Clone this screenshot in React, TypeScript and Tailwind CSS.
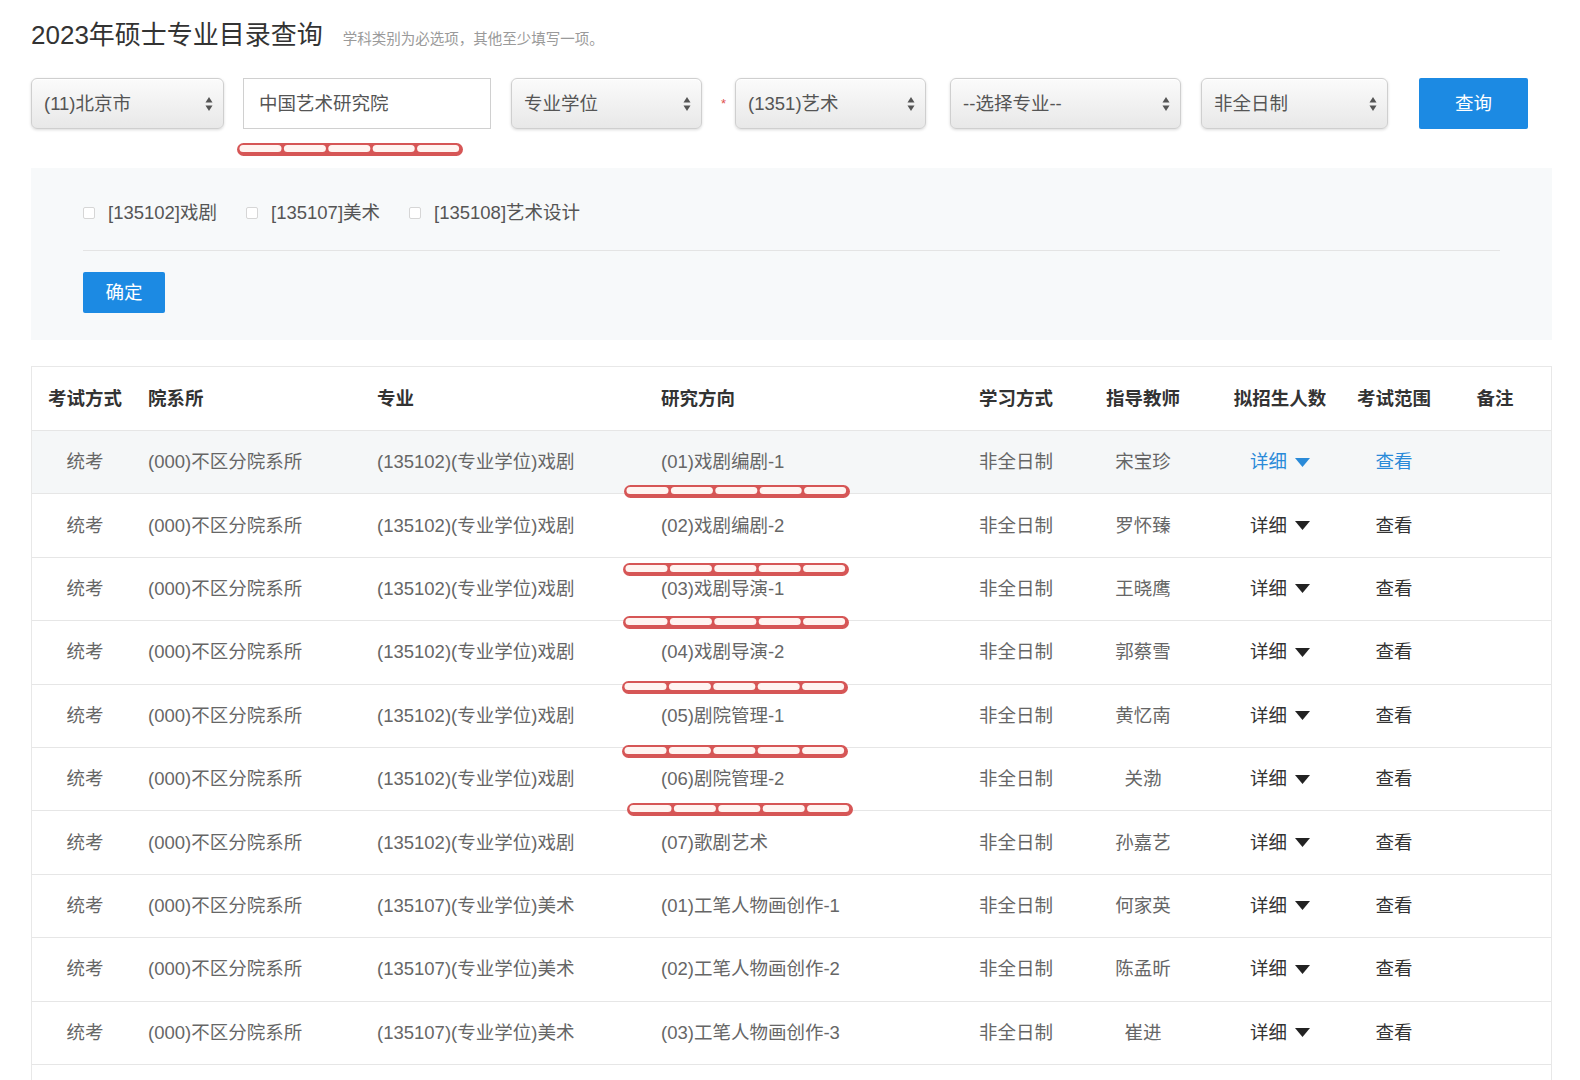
import React from "react";

const rows = [
  { major: "(135102)(专业学位)戏剧", dir: "(01)戏剧编剧-1", teacher: "宋宝珍" },
  { major: "(135102)(专业学位)戏剧", dir: "(02)戏剧编剧-2", teacher: "罗怀臻" },
  { major: "(135102)(专业学位)戏剧", dir: "(03)戏剧导演-1", teacher: "王晓鹰" },
  { major: "(135102)(专业学位)戏剧", dir: "(04)戏剧导演-2", teacher: "郭蔡雪" },
  { major: "(135102)(专业学位)戏剧", dir: "(05)剧院管理-1", teacher: "黄忆南" },
  { major: "(135102)(专业学位)戏剧", dir: "(06)剧院管理-2", teacher: "关渤" },
  { major: "(135102)(专业学位)戏剧", dir: "(07)歌剧艺术", teacher: "孙嘉艺" },
  { major: "(135107)(专业学位)美术", dir: "(01)工笔人物画创作-1", teacher: "何家英" },
  { major: "(135107)(专业学位)美术", dir: "(02)工笔人物画创作-2", teacher: "陈孟昕" },
  { major: "(135107)(专业学位)美术", dir: "(03)工笔人物画创作-3", teacher: "崔进" },
];

// red scribble marks sitting over the page: [left, top]
const marks = [
  [237, 143],
  [624, 485],
  [623, 563],
  [623, 616],
  [622, 681],
  [622, 745],
  [627, 803],
];

function Arrows() {
  return (
    <svg width="8" height="16" viewBox="0 0 8 16" className="shrink-0">
      <path d="M4 1 L7.5 6.5 L0.5 6.5 Z" fill="#555" />
      <path d="M4 15 L7.5 9.5 L0.5 9.5 Z" fill="#555" />
    </svg>
  );
}

function FakeSelect({ label, className }: { label: string; className: string }) {
  return (
    <div
      className={`h-[51px] flex items-center justify-between pl-[12px] pr-[10px] rounded-[6px] border border-[#cfcfcf] bg-linear-to-b from-[#fbfbfb] to-[#e8e8e8] shadow-[0_1px_3px_rgba(0,0,0,0.15),inset_0_1px_0_#fff] text-[18.5px] text-[#555] ${className}`}
    >
      <span>{label}</span>
      <Arrows />
    </div>
  );
}

function Mark() {
  const segs = [0, 1, 2, 3, 4];
  return (
    <svg width="226" height="13" viewBox="0 0 226 13">
      <rect x="0" y="0" width="226" height="13" rx="6.5" fill="#d65656" />
      {segs.map((i) => (
        <rect
          key={i}
          x={2.5 + i * 44.4}
          y="2"
          width="42"
          height="7"
          rx="3.5"
          fill="#fff4f1"
        />
      ))}
    </svg>
  );
}

function Caret({ color }: { color: string }) {
  return (
    <svg width="15" height="9" viewBox="0 0 15 9" className="ml-[8px]">
      <path d="M0 0 L15 0 L7.5 9 Z" fill={color} />
    </svg>
  );
}

function Checkbox() {
  return (
    <span className="inline-block w-[12px] h-[12px] rounded-[2px] border border-[#d6d6d6] bg-white mr-[13px]" />
  );
}

const cols = "grid grid-cols-[106px_229px_284px_305px_120px_134px_140px_88px_114px]";

export default function App() {
  return (
    <div
      className="relative min-h-screen bg-white text-[#555]"
      style={{ fontFamily: '"Liberation Sans", "Noto Sans CJK SC", sans-serif' }}
    >
      <div className="pl-[31px] pr-[28px] pt-[19px]">
        {/* Title */}
        <div className="flex items-baseline">
          <h1 className="text-[26px] leading-[32px] text-[#333]">2023年硕士专业目录查询</h1>
          <span className="ml-[20px] text-[14.5px] text-[#9a9a9a]">
            学科类别为必选项，其他至少填写一项。
          </span>
        </div>

        {/* Filters */}
        <div className="flex items-center mt-[27px]">
          <FakeSelect label="(11)北京市" className="w-[193px]" />
          <div className="ml-[19px] w-[248px] h-[51px] flex items-center pl-[15px] border border-[#d0d0d0] bg-white text-[18.5px] text-[#555]">
            中国艺术研究院
          </div>
          <FakeSelect label="专业学位" className="ml-[20px] w-[191px]" />
          <span className="ml-[19px] mr-[9px] text-[13px] text-[#e05050]">*</span>
          <FakeSelect label="(1351)艺术" className="w-[191px]" />
          <FakeSelect label="--选择专业--" className="ml-[24px] w-[231px]" />
          <FakeSelect label="非全日制" className="ml-[20px] w-[187px]" />
          <button className="ml-[31px] w-[109px] h-[51px] rounded-[2px] bg-[#1c8ae3] text-white text-[18.5px]">
            查询
          </button>
        </div>

        {/* Sub-category panel */}
        <div className="mt-[39px] bg-[#f7f9fa] pl-[52px] pr-[52px] pt-[33px] pb-[27px]">
          <div className="flex items-center h-[24px] text-[18.5px] text-[#555]">
            <label className="flex items-center mr-[29px]">
              <Checkbox />
              [135102]戏剧
            </label>
            <label className="flex items-center mr-[29px]">
              <Checkbox />
              [135107]美术
            </label>
            <label className="flex items-center">
              <Checkbox />
              [135108]艺术设计
            </label>
          </div>
          <div className="mt-[25px] border-t border-[#e4e4e4]" />
          <button className="mt-[21px] w-[82px] h-[41px] rounded-[2px] bg-[#1c8ae3] text-white text-[18.5px]">
            确定
          </button>
        </div>

        {/* Table */}
        <div className="mt-[26px] border border-[#e8e8e8] text-[18.5px]">
          <div className={`${cols} h-[64px] items-center font-bold text-[#333] border-b border-[#e6e6e6]`}>
            <div className="text-center">考试方式</div>
            <div className="pl-[10px]">院系所</div>
            <div className="pl-[10px]">专业</div>
            <div className="pl-[10px]">研究方向</div>
            <div className="text-center">学习方式</div>
            <div className="text-center">指导教师</div>
            <div className="text-center">拟招生人数</div>
            <div className="text-center">考试范围</div>
            <div className="text-center">备注</div>
          </div>
          {rows.map((r, i) => {
            const first = i === 0;
            return (
              <div
                key={i}
                className={`${cols} h-[63.4px] items-center border-b border-[#e6e6e6] ${first ? "bg-[#f5f7f8]" : "bg-white"}`}
              >
                <div className="text-center text-[#666]">统考</div>
                <div className="pl-[10px] text-[#666]">(000)不区分院系所</div>
                <div className="pl-[10px] text-[#666]">{r.major}</div>
                <div className="pl-[10px] text-[#666]">{r.dir}</div>
                <div className="text-center text-[#666]">非全日制</div>
                <div className="text-center text-[#666]">{r.teacher}</div>
                <div className={`flex items-center justify-center ${first ? "text-[#2a8ad8]" : "text-[#333]"}`}>
                  详细
                  <Caret color={first ? "#2a8ad8" : "#222"} />
                </div>
                <div className={`text-center ${first ? "text-[#2a8ad8]" : "text-[#333]"}`}>查看</div>
                <div />
              </div>
            );
          })}
          <div className="h-[40px]" />
        </div>
      </div>

      {marks.map(([x, y], i) => (
        <div key={i} className="absolute" style={{ left: x, top: y }}>
          <Mark />
        </div>
      ))}
    </div>
  );
}
